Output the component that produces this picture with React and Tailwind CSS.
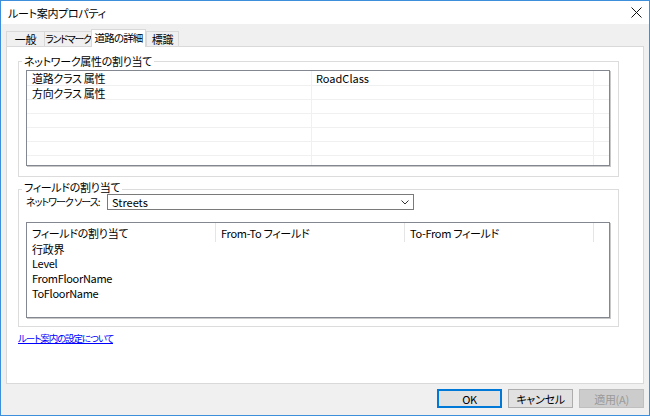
import React from 'react';

const rows1 = [
  { name: '道路クラス 属性', value: 'RoadClass', h: 'h-[15px]' },
  { name: '方向クラス 属性', value: '', h: 'h-[14px]' },
  { name: '', value: '', h: 'h-[14px]' },
  { name: '', value: '', h: 'h-[14px]' },
  { name: '', value: '', h: 'h-[14px]' },
  { name: '', value: '', h: 'h-[14px]' },
];

const rows2 = [
  { name: '行政界', h: 'h-[14px]' },
  { name: 'Level', h: 'h-[14px]' },
  { name: 'FromFloorName', h: 'h-[15px]' },
  { name: 'ToFloorName', h: 'h-[15px]' },
];

const tabs = [
  { label: '一般', w: 'w-[38px]', t: 'tracking-[-0.3px]' },
  { label: 'ランドマーク', w: 'w-[47px]', t: 'text-[10px] tracking-[-1.3px]' },
  { label: '道路の詳細', w: 'w-[55px]', t: 'text-[10.5px] tracking-[-0.8px]' },
  { label: '標識', w: 'w-[33px]', t: 'tracking-[-0.3px]' },
];

export default function App() {
  return (
    <div className="w-[650px] h-[416px] border border-[#3d8fdc] bg-[#f0f0f0] flex flex-col text-[11px] leading-[12px] text-black whitespace-nowrap font-['Noto_Sans_CJK_JP','Noto_Sans',sans-serif] [font-feature-settings:'palt'] tracking-[-0.3px]">
      {/* title bar */}
      <div className="h-[23px] bg-white flex items-center justify-between pl-[7px] pr-[6px]">
        <span>ルート案内プロパティ</span>
        <svg width="11" height="11" viewBox="0 0 11 11" className="mr-[1px]">
          <path d="M0.5 0.5L10.5 10.5M10.5 0.5L0.5 10.5" stroke="#111" strokeWidth="1" />
        </svg>
      </div>

      <div className="flex-1 flex flex-col px-[5px] pt-[5px]">
        {/* tabs */}
        <div className="h-[17px] flex items-end">
          {tabs.map((t, i) =>
            i === 2 ? (
              <div
                key={t.label}
                className={`${t.w} ${t.t} h-[18px] -mb-px relative z-10 bg-white border-x border-t border-[#d9d9d9] flex items-center justify-center pb-[2px]`}
              >
                {t.label}
              </div>
            ) : (
              <div
                key={t.label}
                className={`${t.w} ${t.t} h-[15px] bg-[#f0f0f0] border-t border-l border-[#d9d9d9] ${i === 3 ? 'border-r' : ''} flex items-center justify-center`}
              >
                {t.label}
              </div>
            )
          )}
        </div>

        {/* tab page */}
        <div className="h-[338px] bg-white border border-[#d9d9d9] flex flex-col">
          {/* group 1 */}
          <div className="relative ml-[11px] mt-[14px] w-[601px] h-[116px] border border-[#dcdcdc] pl-[7px] pt-[8px]">
            <span className="absolute -top-[7px] left-[3px] bg-white px-[2px]">ネットワーク属性の割り当て</span>
            <div className="w-[584px] h-[96px] border border-[#828790] shadow-[1px_1px_0_#c8c8c8] overflow-hidden">
              {rows1.map((r, i) => (
                <div key={i} className={`${r.h} flex border-b border-[#f0f0f0]`}>
                  <div className="w-[285px] border-r border-[#f0f0f0] pl-[5px] flex items-center">{r.name}</div>
                  <div className="w-[282px] border-r border-[#f0f0f0] pl-[4px] flex items-center tracking-normal">{r.value}</div>
                  <div className="flex-1" />
                </div>
              ))}
              <div className="h-[14px] flex">
                <div className="w-[285px] border-r border-[#f0f0f0]" />
                <div className="w-[282px] border-r border-[#f0f0f0]" />
              </div>
            </div>
          </div>

          {/* group 2 */}
          <div className="relative ml-[11px] mt-[12px] w-[601px] h-[138px] border border-[#dcdcdc] pl-[7px] pt-[4px]">
            <span className="absolute -top-[9px] left-[3px] bg-white px-[2px]">フィールドの割り当て</span>
            <div className="flex items-center h-[16px]">
              <span className="w-[81px] text-[10px] tracking-[-1px]">ネットワーク ソース:</span>
              <div className="w-[307px] h-[16px] border border-[#7a7a7a] bg-white flex items-center justify-between pl-[4px] pr-[4px]">
                <span className="tracking-normal">Streets</span>
                <svg width="8" height="5" viewBox="0 0 8 5">
                  <path d="M0.5 0.5L4 4L7.5 0.5" fill="none" stroke="#333" strokeWidth="1" />
                </svg>
              </div>
            </div>
            <div className="mt-[12px] w-[584px] h-[96px] border border-[#828790] shadow-[1px_1px_0_#c8c8c8] overflow-hidden">
              <div className="h-[19px] flex">
                <div className="w-[189px] border-r border-[#e5e5e5] pl-[5px] flex items-center">フィールドの割り当て</div>
                <div className="w-[189px] border-r border-[#e5e5e5] pl-[5px] flex items-center">From-To フィールド</div>
                <div className="w-[189px] border-r border-[#e5e5e5] pl-[5px] flex items-center">To-From フィールド</div>
                <div className="flex-1" />
              </div>
              {rows2.map((r) => (
                <div key={r.name} className={`${r.h} pl-[5px] flex items-center`}>
                  {r.name}
                </div>
              ))}
            </div>
          </div>

          <a href="#" className="ml-[11px] mt-[5px] w-fit text-[9.5px] tracking-[-1.1px] text-[#0000ff] underline">
            ルート案内の設定について
          </a>
        </div>

        {/* buttons */}
        <div className="mt-[5px] flex justify-end gap-[6px]">
          <button className="w-[65px] h-[19px] bg-[#e1e1e1] border border-[#0078d7] shadow-[inset_0_0_0_1px_#0078d7] flex items-center justify-center">
            OK
          </button>
          <button className="w-[65px] h-[19px] bg-[#e1e1e1] border border-[#adadad] flex items-center justify-center">
            キャンセル
          </button>
          <button className="w-[65px] h-[19px] bg-[#cccccc] border border-[#bfbfbf] text-[#9a9a9a] flex items-center justify-center">
            適用(A)
          </button>
        </div>
      </div>
    </div>
  );
}
